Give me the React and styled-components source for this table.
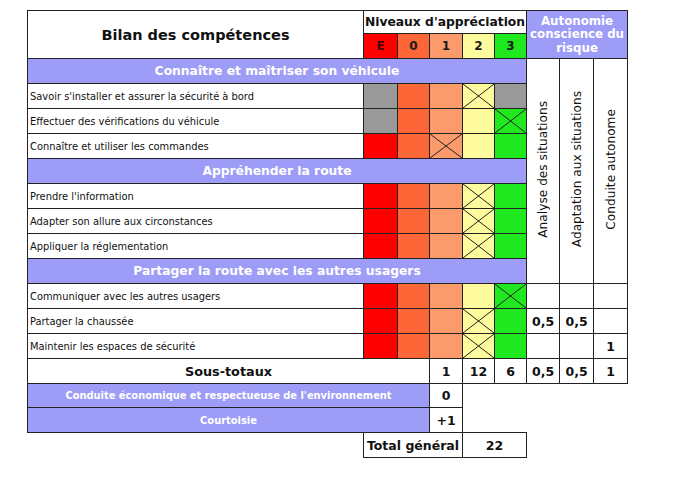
import { Fragment } from 'react'
import styled, { createGlobalStyle } from 'styled-components'

const GlobalStyle = createGlobalStyle`
  body {
    margin: 0;
    background: #fff;
    font-family: 'DejaVu Sans', Verdana, sans-serif;
  }
`

const LINE = '#222'
const PURPLE = '#9d9cf6'
const GREY = '#9a9a9a'

const LEVELS = [
  { key: 'E', color: '#ff0000', ink: '#4a0000' },
  { key: '0', color: '#fd6636', ink: '#1a1a1a' },
  { key: '1', color: '#fb9a6b', ink: '#1a1a1a' },
  { key: '2', color: '#fefb9e', ink: '#1a1a1a' },
  { key: '3', color: '#1fe81f', ink: '#1a1a1a' },
]

const WIDTHS = [336, 34, 32, 33, 32, 32, 33, 34, 34]

const SECTIONS = [
  {
    title: 'Connaître et maîtriser son véhicule',
    rows: [
      { label: "Savoir s'installer et assurer la sécurité à bord", grey: [0, 4], cross: 3 },
      { label: 'Effectuer des vérifications du véhicule', grey: [0], cross: 4 },
      { label: 'Connaître et utiliser les commandes', cross: 2 },
    ],
  },
  {
    title: 'Appréhender la route',
    rows: [
      { label: "Prendre l'information", cross: 3 },
      { label: 'Adapter son allure aux circonstances', cross: 3 },
      { label: 'Appliquer la réglementation', cross: 3 },
    ],
  },
  {
    title: 'Partager la route avec les autres usagers',
    rows: [
      { label: 'Communiquer avec les autres usagers', cross: 4, values: ['', '', ''] },
      { label: 'Partager la chaussée', cross: 3, values: ['0,5', '0,5', ''] },
      { label: 'Maintenir les espaces de sécurité', cross: 3, values: ['', '', '1'] },
    ],
  },
]

const AUTONOMY = ['Analyse des situations', 'Adaptation aux situations', 'Conduite autonome']

const Page = styled.div`
  padding: 10px 0 0 27px;
`

const Table = styled.table`
  border-collapse: collapse;
  table-layout: fixed;
  width: 600px;
  color: #111;
`

const Row = styled.tr`
  height: ${(p) => p.$h || 25}px;
`

const Cell = styled.td`
  border: 1px solid ${LINE};
  padding: 0;
  text-align: center;
  vertical-align: middle;
  background: ${(p) => p.$bg || '#fff'};
  font-size: ${(p) => p.$size || 12.5}px;
  font-weight: bold;
  white-space: nowrap;
`

const Blank = styled.td`
  border: none;
  padding: 0;
`

const TitleCell = styled(Cell)`
  font-size: 14.5px;
`

const AutoHead = styled(Cell)`
  background: ${PURPLE};
  color: #fff;
  font-size: 11.8px;
  line-height: 13.5px;
  white-space: normal;
  padding-top: 1px;
`

const LevelHead = styled(Cell)`
  color: ${(p) => p.$ink};
  font-size: 12px;
`

const Section = styled(Cell)`
  background: ${PURPLE};
  color: #fff;
  font-size: 12.3px;
`

const Label = styled(Cell)`
  text-align: left;
  padding-left: 2px;
  font-size: 9.9px;
  font-weight: normal;
`

const Extra = styled(Cell)`
  background: ${PURPLE};
  color: #fff;
  font-size: 9.9px;
`

const LevelCell = styled(Cell)`
  position: relative;
`

const Cross = styled.svg`
  position: absolute;
  inset: 0;
  width: 100%;
  height: 100%;
`

const VerticalCell = styled(Cell)`
  font-weight: normal;
`

const Vertical = styled.span`
  display: inline-block;
  writing-mode: vertical-rl;
  transform: rotate(180deg);
  font-size: 12.2px;
`

const Mark = () => (
  <Cross viewBox="0 0 10 10" preserveAspectRatio="none">
    <line x1="0" y1="0" x2="10" y2="10" stroke="#222" strokeWidth="1" vectorEffect="non-scaling-stroke" />
    <line x1="10" y1="0" x2="0" y2="10" stroke="#222" strokeWidth="1" vectorEffect="non-scaling-stroke" />
  </Cross>
)

const SkillRow = ({ row }) => (
  <Row>
    <Label>{row.label}</Label>
    {LEVELS.map((lvl, i) => (
      <LevelCell key={lvl.key} $bg={row.grey?.includes(i) ? GREY : lvl.color}>
        {row.cross === i && <Mark />}
      </LevelCell>
    ))}
    {row.values?.map((v, i) => (
      <Cell key={i}>{v}</Cell>
    ))}
  </Row>
)

const App = () => {
  return (
    <Page>
      <GlobalStyle />
      <Table>
        <colgroup>
          {WIDTHS.map((w, i) => (
            <col key={i} style={{ width: w }} />
          ))}
        </colgroup>
        <tbody>
          <Row $h={23}>
            <TitleCell rowSpan={2}>Bilan des compétences</TitleCell>
            <Cell colSpan={5} $size={12.3}>Niveaux d'appréciation</Cell>
            <AutoHead colSpan={3} rowSpan={2}>
              Autonomie
              <br />
              conscience du
              <br />
              risque
            </AutoHead>
          </Row>
          <Row>
            {LEVELS.map((lvl) => (
              <LevelHead key={lvl.key} $bg={lvl.color} $ink={lvl.ink}>
                {lvl.key}
              </LevelHead>
            ))}
          </Row>
          {SECTIONS.map((section, si) => (
            <Fragment key={section.title}>
              <Row>
                <Section colSpan={6}>{section.title}</Section>
                {si === 0 &&
                  AUTONOMY.map((text) => (
                    <VerticalCell key={text} rowSpan={9}>
                      <Vertical>{text}</Vertical>
                    </VerticalCell>
                  ))}
              </Row>
              {section.rows.map((row) => (
                <SkillRow key={row.label} row={row} />
              ))}
            </Fragment>
          ))}
          <Row>
            <Cell colSpan={3} $size={12.8}>Sous-totaux</Cell>
            <Cell>1</Cell>
            <Cell>12</Cell>
            <Cell>6</Cell>
            <Cell>0,5</Cell>
            <Cell>0,5</Cell>
            <Cell>1</Cell>
          </Row>
          <Row $h={24}>
            <Extra colSpan={3}>Conduite économique et respectueuse de l'environnement</Extra>
            <Cell>0</Cell>
            <Blank colSpan={5} />
          </Row>
          <Row>
            <Extra colSpan={3}>Courtoisie</Extra>
            <Cell>+1</Cell>
            <Blank colSpan={5} />
          </Row>
          <Row>
            <Blank />
            <Cell colSpan={3}>Total général</Cell>
            <Cell colSpan={2}>22</Cell>
            <Blank colSpan={3} />
          </Row>
        </tbody>
      </Table>
    </Page>
  )
}

export default App
